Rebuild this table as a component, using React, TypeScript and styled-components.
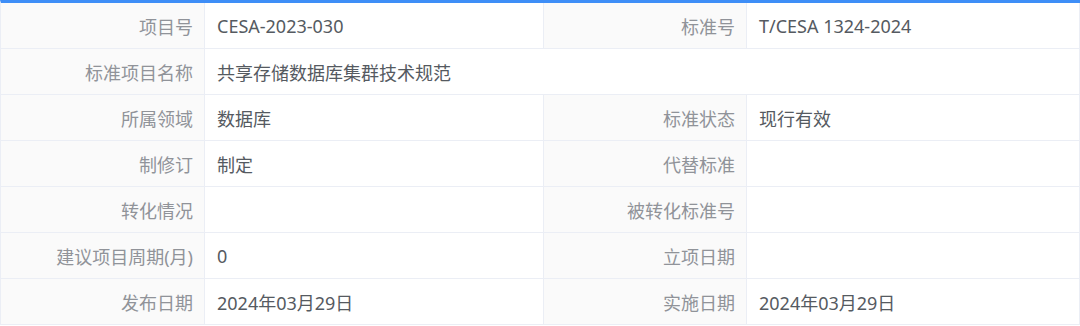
import React from "react";
import styled, { createGlobalStyle } from "styled-components";

const GlobalStyle = createGlobalStyle`
  html, body {
    margin: 0;
    padding: 0;
    background: #ffffff;
  }
  body {
    font-family: "Noto Sans", "Noto Sans CJK SC", sans-serif;
  }
`;

const Table = styled.div`
  width: 1080px;
  box-sizing: border-box;
  border-top: 3px solid #3e8ef7;
  border-left: 1px solid #ebeef5;
  display: grid;
  grid-template-columns: 204px 339px 203px 1fr;
  grid-auto-rows: 46px;
`;

const Cell = styled.div<{ $span?: number }>`
  box-sizing: border-box;
  display: flex;
  align-items: center;
  border-right: 1px solid #ebeef5;
  border-bottom: 1px solid #ebeef5;
  font-size: 18px;
  white-space: nowrap;
  grid-column: span ${(p) => p.$span ?? 1};
`;

const Label = styled(Cell)`
  justify-content: flex-end;
  padding-right: 11px;
  background: #fafafa;
  color: #909399;
`;

const Value = styled(Cell)`
  padding-left: 12px;
  background: #ffffff;
  color: #555a61;
`;

type Field = { label: string; value: string; wide?: boolean };

const rows: Field[][] = [
  [
    { label: "项目号", value: "CESA-2023-030" },
    { label: "标准号", value: "T/CESA 1324-2024" },
  ],
  [{ label: "标准项目名称", value: "共享存储数据库集群技术规范", wide: true }],
  [
    { label: "所属领域", value: "数据库" },
    { label: "标准状态", value: "现行有效" },
  ],
  [
    { label: "制修订", value: "制定" },
    { label: "代替标准", value: "" },
  ],
  [
    { label: "转化情况", value: "" },
    { label: "被转化标准号", value: "" },
  ],
  [
    { label: "建议项目周期(月)", value: "0" },
    { label: "立项日期", value: "" },
  ],
  [
    { label: "发布日期", value: "2024年03月29日" },
    { label: "实施日期", value: "2024年03月29日" },
  ],
];

export default function App() {
  return (
    <>
      <GlobalStyle />
      <Table>
        {rows.map((row, i) =>
          row.map((f) => (
            <React.Fragment key={`${i}-${f.label}`}>
              <Label>{f.label}</Label>
              <Value $span={f.wide ? 3 : 1}>{f.value}</Value>
            </React.Fragment>
          ))
        )}
      </Table>
    </>
  );
}
